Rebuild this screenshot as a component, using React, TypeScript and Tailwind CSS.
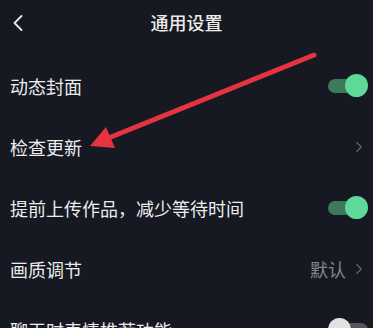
import { ChevronLeft, ChevronRight } from "lucide-react";

type Row = {
  label: string;
  kind: "on" | "off" | "link";
  value?: string;
};

const rows: Row[] = [
  { label: "动态封面", kind: "on" },
  { label: "检查更新", kind: "link" },
  { label: "提前上传作品，减少等待时间", kind: "on" },
  { label: "画质调节", kind: "link", value: "默认" },
  { label: "聊天时表情推荐功能", kind: "off" },
];

function Toggle({ on }: { on: boolean }) {
  return (
    <div className="relative w-[40px] h-[24px] flex items-center">
      <div
        className={
          on
            ? "h-[14px] w-[34px] rounded-full bg-[#3d7a5b]"
            : "h-[14px] w-[34px] ml-[6px] rounded-full bg-[#55565c]"
        }
      />
      <div
        className={
          on
            ? "absolute right-0 top-0 h-[23px] w-[23px] rounded-full bg-[#5ed99a]"
            : "absolute left-0 top-0 h-[23px] w-[23px] rounded-full bg-[#e2e2e4]"
        }
      />
    </div>
  );
}

export default function App() {
  return (
    <div
      className="relative w-[373px] h-[328px] overflow-hidden bg-[#161822] text-[#ececec]"
      style={{ fontFamily: '"Noto Sans CJK SC", "Noto Sans", sans-serif' }}
    >
      <header className="relative h-[55px] flex items-start justify-center pt-[8px]">
        <ChevronLeft
          className="absolute left-[4px] top-[9px] text-[#e6e6e6]"
          size={28}
          strokeWidth={1.6}
        />
        <h1 className="text-[18px] leading-[28px] font-medium">通用设置</h1>
      </header>

      <section className="flex flex-col">
        {rows.map((row) => (
          <div
            key={row.label}
            className="h-[61px] flex items-center justify-between pl-[10px] pr-[5px]"
          >
            <span className="text-[18px] leading-none">{row.label}</span>
            {row.kind === "link" ? (
              <div className="flex items-center gap-[4px] text-[#85858a]">
                {row.value && (
                  <span className="text-[18px] leading-none">{row.value}</span>
                )}
                <ChevronRight size={18} strokeWidth={1.5} className="text-[#6a6a70]" />
              </div>
            ) : (
              <Toggle on={row.kind === "on"} />
            )}
          </div>
        ))}
      </section>

      {/* red annotation arrow */}
      <svg
        className="absolute left-0 top-0 pointer-events-none"
        width={373}
        height={328}
        viewBox="0 0 373 328"
      >
        <line
          x1={314}
          y1={55}
          x2={106}
          y2={139}
          stroke="#e53440"
          strokeWidth={5}
          strokeLinecap="round"
        />
        <polygon points="90,146 115,148 106,127" fill="#e53440" />
      </svg>
    </div>
  );
}
